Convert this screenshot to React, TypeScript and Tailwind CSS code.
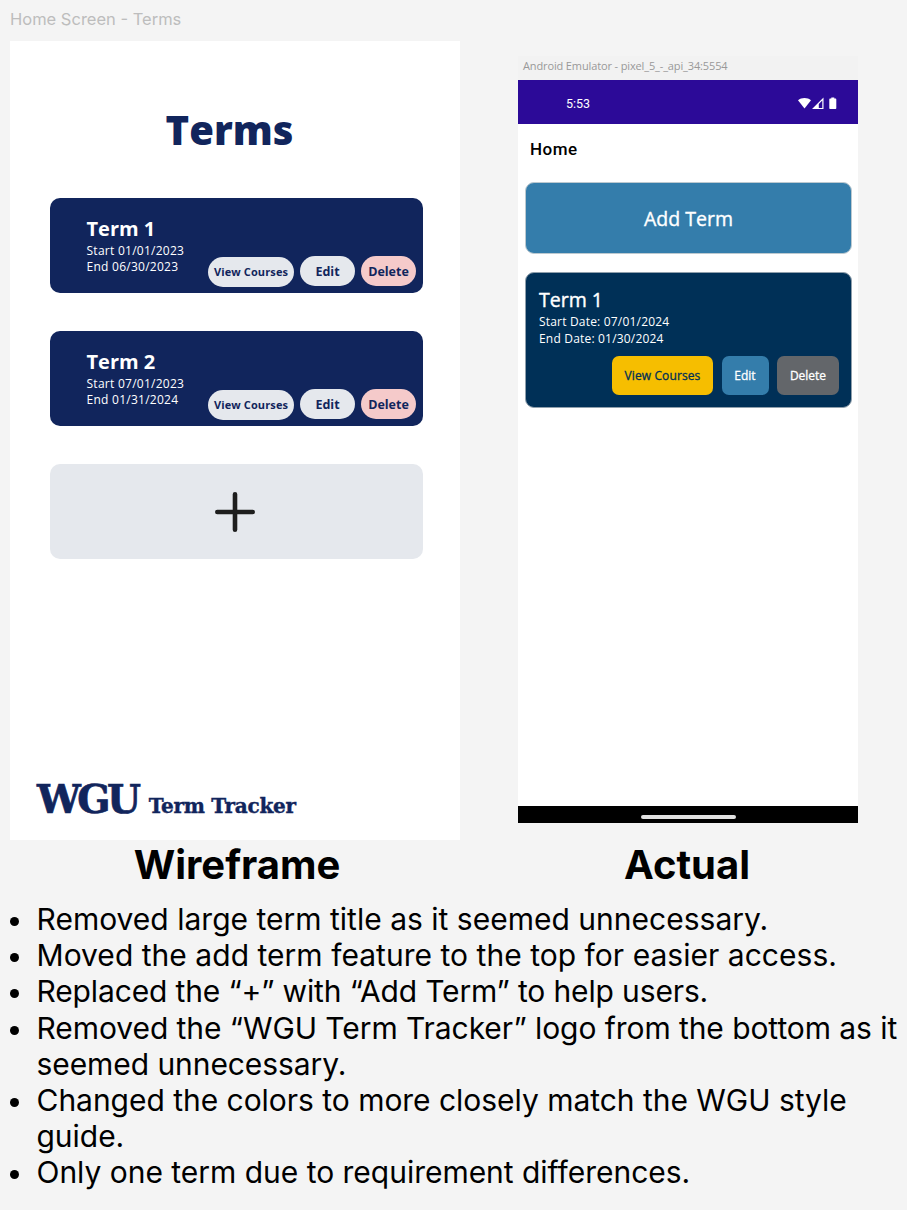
import React from "react";

type WireTerm = { name: string; start: string; end: string };

const wireTerms: WireTerm[] = [
  { name: "Term 1", start: "Start 01/01/2023", end: "End 06/30/2023" },
  { name: "Term 2", start: "Start 07/01/2023", end: "End 01/31/2024" },
];

const notes = [
  { text: "Removed large term title as it seemed unnecessary.", tracking: "tracking-[0.01px]" },
  { text: "Moved the add term feature to the top for easier access.", tracking: "tracking-[0.03px]" },
  { text: "Replaced the “+” with “Add Term” to help users.", tracking: "tracking-[-0.14px]" },
  {
    text: "Removed the “WGU Term Tracker” logo from the bottom as it seemed unnecessary.",
    tracking: "tracking-[-0.07px]",
  },
  { text: "Changed the colors to more closely match the WGU style guide.", tracking: "tracking-[-0.03px]" },
  { text: "Only one term due to requirement differences.", tracking: "tracking-[-0.02px]" },
];

function WireCard({ term }: { term: WireTerm }) {
  return (
    <div className="flex h-[95px] w-[373px] rounded-[10px] bg-[#11255c] pl-9 text-white">
      <div className="w-[122px] shrink-0 pt-[17px]">
        <h2 className="pl-[0.5px] text-[20px] leading-[27px] font-bold">{term.name}</h2>
        <p className="pt-[0.6px] pl-[0.5px] text-[12px] leading-4 tracking-[0.26px]">{term.start}</p>
        <p className="pl-[0.5px] text-[12px] leading-4 tracking-[0.26px]">{term.end}</p>
      </div>
      <div className="flex items-start gap-1.5 pt-[58px] font-bold whitespace-nowrap text-[#11255c]">
        <button className="mt-px h-[30px] w-[86px] rounded-full bg-[#e5e8ed] text-[11px] tracking-[0.12px]">
          View Courses
        </button>
        <button className="h-[30px] w-[55px] rounded-full bg-[#e5e8ed] pt-[1.4px] text-[12.5px]">Edit</button>
        <button className="h-[30px] w-[55px] rounded-full bg-[#f5caca] pt-[1.4px] text-[12.5px]">Delete</button>
      </div>
    </div>
  );
}

function Wireframe() {
  return (
    <section className="flex h-[799px] w-[450px] flex-col bg-white pl-10 font-['Open_Sans',sans-serif]">
      <h1 className="mt-[62px] w-[359px] text-center text-[40px] leading-[54px] font-extrabold text-[#11255c]">
        Terms
      </h1>
      <div className="mt-[41.4px] flex flex-col gap-[37.8px]">
        {wireTerms.map((t) => (
          <WireCard key={t.name} term={t} />
        ))}
        <button className="flex h-[95px] w-[373px] items-center justify-center rounded-[10px] bg-[#e5e8ed] pt-px pr-1">
          <svg width="40" height="40" viewBox="0 0 40 40" stroke="#1e1e1e" strokeWidth="4.6" strokeLinecap="round">
            <path d="M20 2.3V37.7M2.3 20H37.7" />
          </svg>
        </button>
      </div>
      <div className="mt-auto mb-[11px] -ml-[13px] flex items-baseline gap-[11px] font-['DejaVu_Serif',serif] leading-[46px] font-bold whitespace-nowrap text-[#11255c]">
        <span className="text-[39px] tracking-[-3.5px] [-webkit-text-stroke:0.7px]">WGU</span>
        <span className="text-[20px] tracking-[-0.25px] [-webkit-text-stroke:0.4px]">Term Tracker</span>
      </div>
    </section>
  );
}

function StatusIcons() {
  return (
    <svg width="40" height="14" viewBox="0 0 40 14" fill="white">
      <path d="M0 3.2C3.500.3 9.500.3 13 3.200L6.500 11.600Z" />
      <path fillRule="evenodd" d="M14 12L25.500.500V12ZM20.800 10.900H24.300V3.600L20.800 7.100Z" />
      <path d="M33.300.4h3v1.100h1c.6 0 1 .4 1 1V11c0 .6-.4 1-1 1h-5c-.6 0-1-.4-1-1V2.500c0-.6.4-1 1-1h1z" />
    </svg>
  );
}

function Actual() {
  return (
    <section className="mt-[15px] flex h-[767px] w-[340px] flex-col bg-white font-['Open_Sans',sans-serif]">
      <div className="h-[24px] bg-[#f2f2f2] pl-[5px] text-[11px] leading-[20px] tracking-[-0.13px] whitespace-nowrap text-[#999]">
        Android Emulator - pixel_5_-_api_34:5554
      </div>
      <div className="flex h-[44px] items-center justify-between bg-[#2c0a98] pt-[3px] pr-5 pl-12 text-white">
        <span className="pt-px font-[Roboto,sans-serif] text-[12.5px]">5:53</span>
        <StatusIcons />
      </div>
      <h2 className="h-[58px] pl-3 font-[Roboto,sans-serif] text-[17px] leading-[50px] font-medium tracking-[0.5px] text-black">
        Home
      </h2>
      <button className="ml-[7px] h-[72px] w-[327px] rounded-[9px] border border-[#bcc9d0] bg-[#347dab] pt-px text-[19.5px] text-white [-webkit-text-stroke:0.35px]">
        Add Term
      </button>
      <div className="mt-[18px] ml-[7px] h-[136px] w-[327px] rounded-[9px] border border-[#8f9fac] bg-[#003057] pt-[13px] pr-3 pl-[13px] text-white">
        <h3 className="text-[19.5px] leading-[27px] [-webkit-text-stroke:0.4px]">Term 1</h3>
        <p className="text-[12px] leading-[17px] tracking-[0.19px]">Start Date: 07/01/2024</p>
        <p className="pt-[0.4px] text-[12px] leading-[17px] tracking-[0.19px]">End Date: 01/30/2024</p>
        <div className="mt-[9px] flex justify-end gap-[8.5px] text-[12px] whitespace-nowrap [-webkit-text-stroke:0.3px]">
          <button className="h-[39px] w-[101px] rounded-[7px] bg-[#f6be00] tracking-[0.1px] text-[#003057]">
            View Courses
          </button>
          <button className="h-[39px] w-[47px] rounded-[7px] bg-[#347dab]">Edit</button>
          <button className="h-[39px] w-[62px] rounded-[7px] bg-[#63666a]">Delete</button>
        </div>
      </div>
      <div className="mt-auto flex h-[17px] items-center justify-center bg-black pt-1">
        <div className="h-1 w-[95px] rounded-full bg-[#e2e2e2]" />
      </div>
    </section>
  );
}

export default function App() {
  return (
    <main className="h-[1210px] w-[907px] overflow-hidden bg-[#f4f4f4] font-[Inter,sans-serif] text-black">
      <header className="h-[41px] pl-2.5 text-[16.5px] leading-[39px] text-[#bdbdbd]">Home Screen - Terms</header>
      <div className="flex gap-[58px] pl-2.5">
        <Wireframe />
        <Actual />
      </div>
      <div className="flex pl-2.5 text-center text-[40px] leading-[50px] font-bold">
        <h2 className="w-[454px]">Wireframe</h2>
        <h2 className="ml-[53px] w-[340px]">Actual</h2>
      </div>
      <ul className="mt-[11px] text-[30px] leading-[36.2px]">
        {notes.map((n) => (
          <li key={n.text} className="flex pl-[9.5px]">
            <span className="mt-[16px] mr-[18px] size-[9px] shrink-0 rounded-full bg-black" />
            <span className={n.tracking}>{n.text}</span>
          </li>
        ))}
      </ul>
    </main>
  );
}
